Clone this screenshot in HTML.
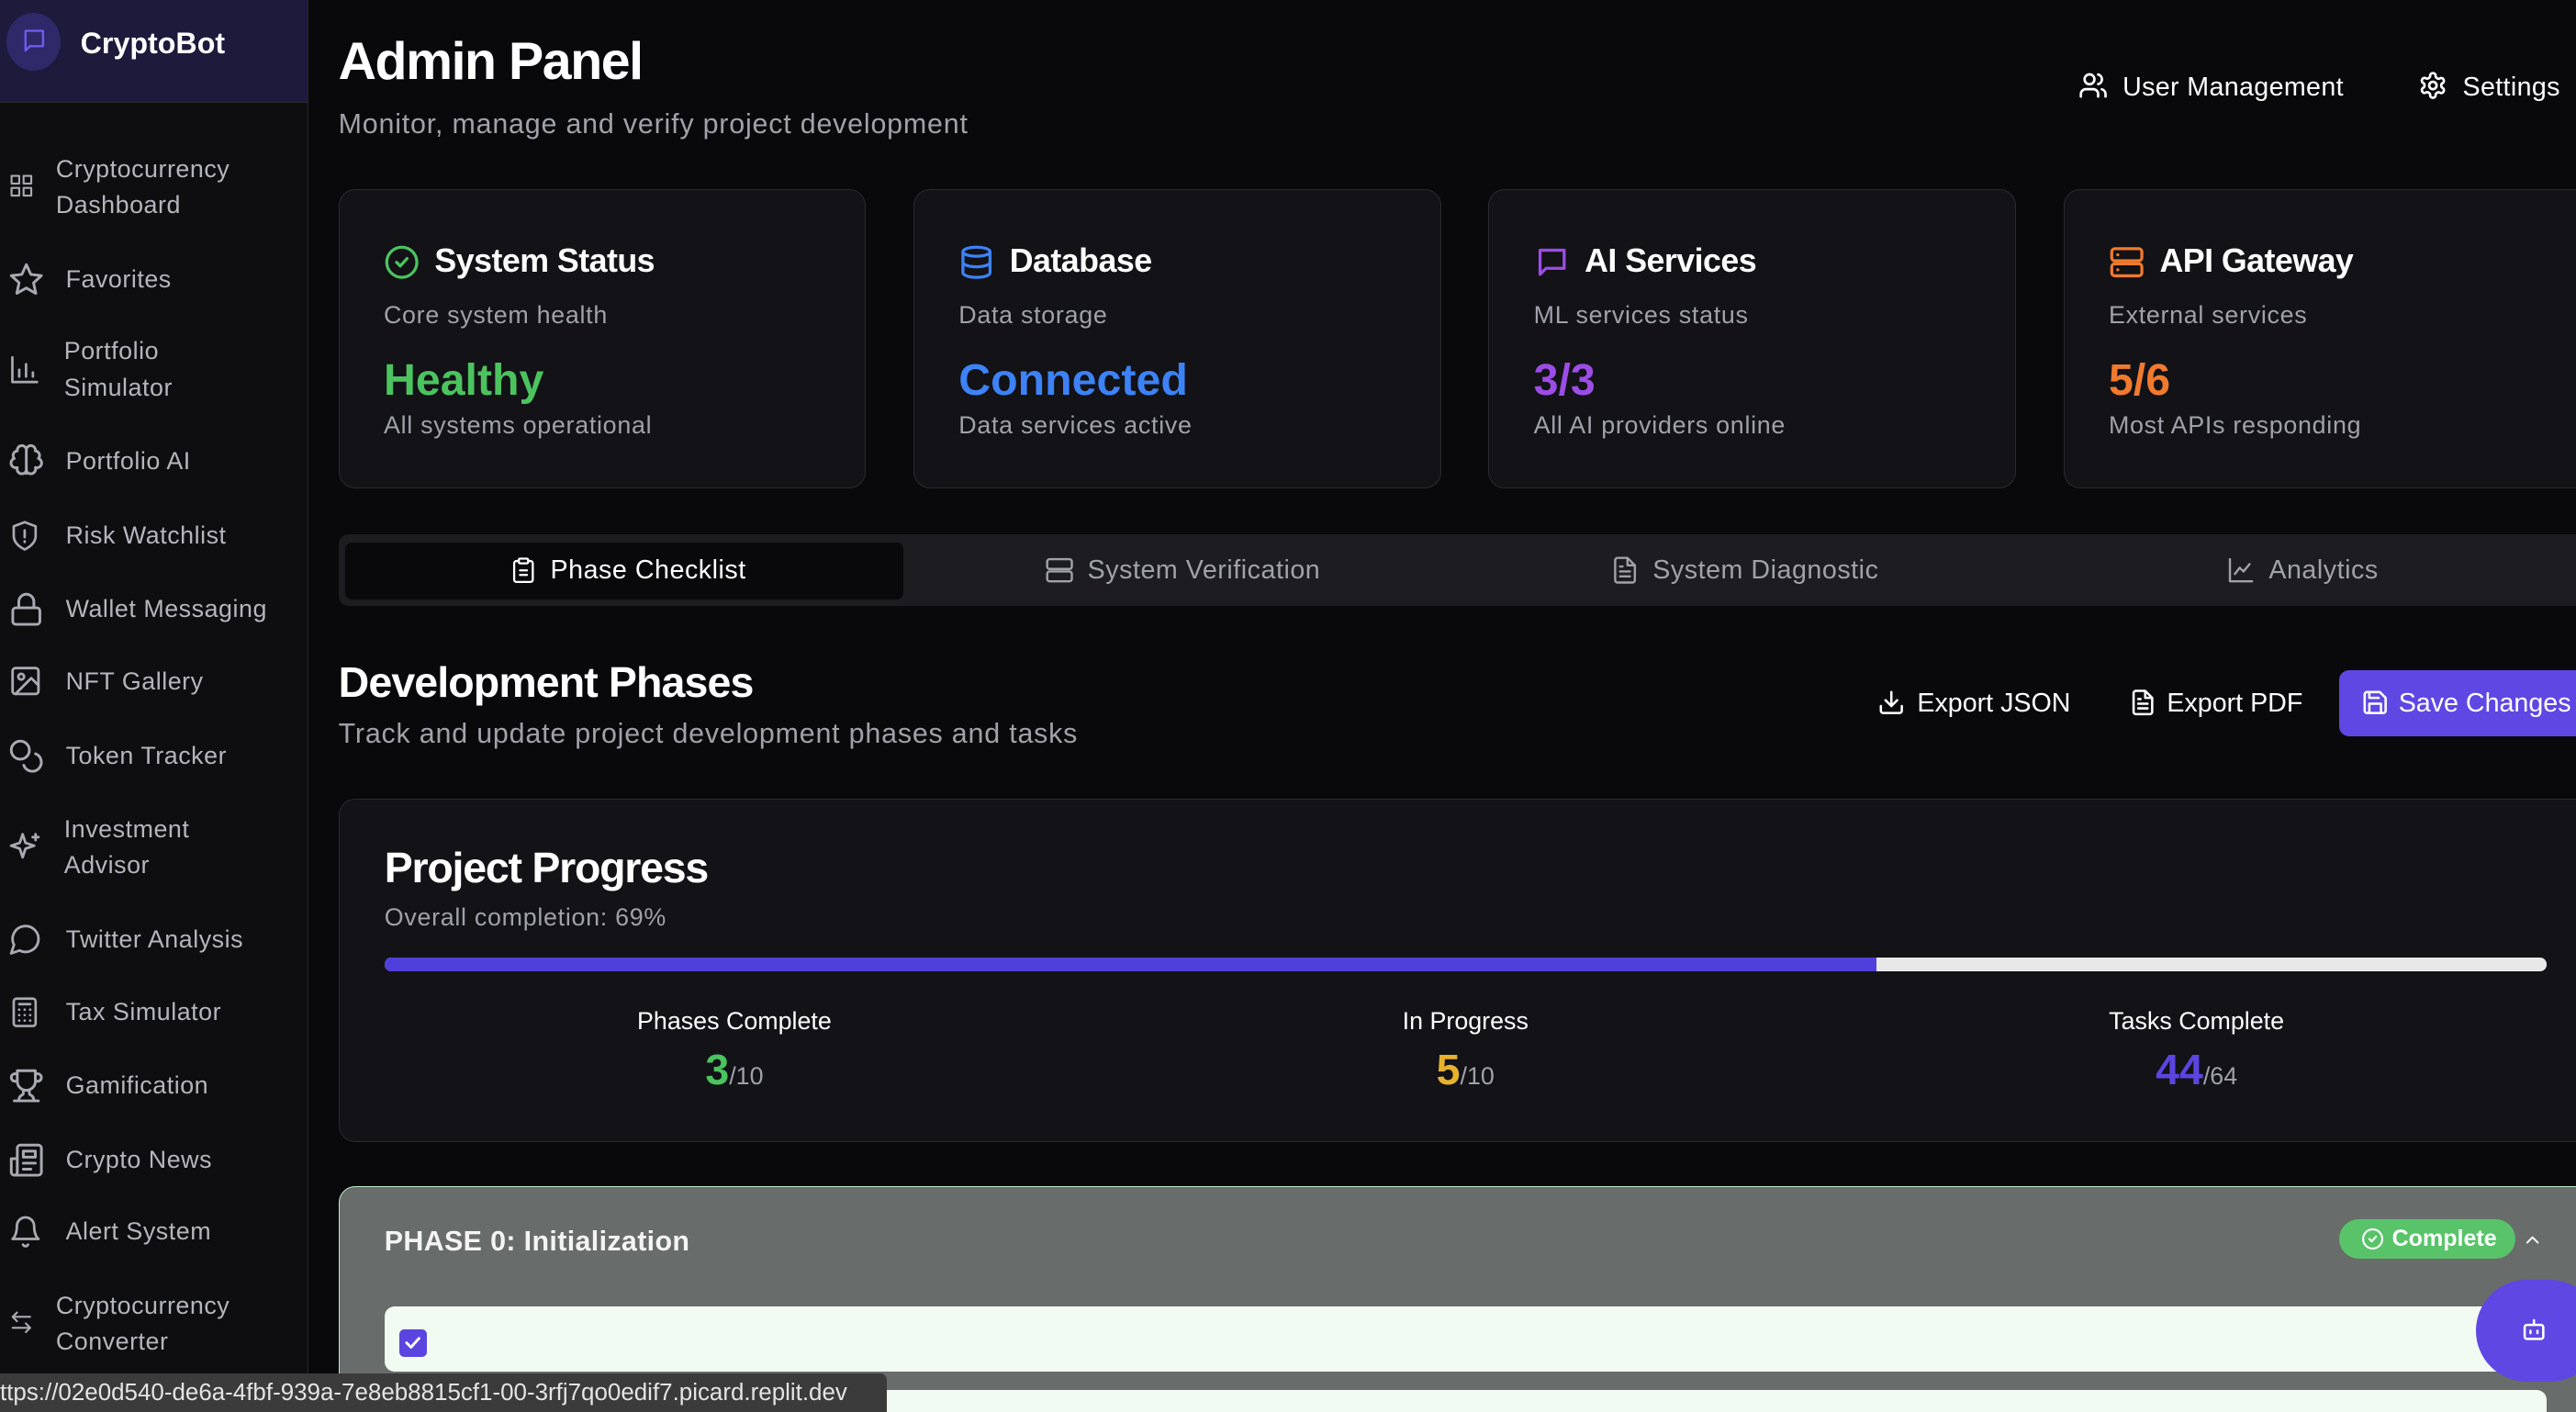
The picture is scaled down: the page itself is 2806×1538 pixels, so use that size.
<!DOCTYPE html>
<html><head><meta charset="utf-8"><style>
html,body{margin:0;padding:0;background:#09090b;overflow:hidden;width:2806px;height:1538px}
#w{zoom:1.78954;width:1568px;height:860px;position:relative;font-family:"Liberation Sans",sans-serif;color:#fff;overflow:hidden}
.a{position:absolute}
svg{fill:none;stroke-width:2;stroke-linecap:round;stroke-linejoin:round}
.side{left:0;top:0;width:187px;height:860px;background:#0e0e11;border-right:1px solid #26262b}
.nav{position:absolute;left:0;width:187px;font-size:15px;color:#b5b5bd;line-height:22px;letter-spacing:.3px}
.nav svg{position:absolute;left:5px;stroke:#a9a9b2;stroke-width:1.8}
.card{top:115px;width:320px;height:181px;background:#121217;border:1px solid #2a2a31;border-radius:10px}
.card .t{position:absolute;left:58px;top:32px;font-size:20px;font-weight:bold;letter-spacing:-.3px}
.card svg{position:absolute;left:27px;top:33px}
.card .s{position:absolute;left:27px;top:68px;font-size:15px;color:#a1a1aa;letter-spacing:.4px}
.card .v{position:absolute;left:27px;top:100px;font-size:27px;font-weight:bold}
.card .d{position:absolute;left:27px;top:135px;font-size:15px;color:#a1a1aa;letter-spacing:.4px}
.tab{top:338px;font-size:16px;color:#a1a1aa;display:flex;align-items:center;gap:8px;letter-spacing:.3px}
.tab svg{stroke:#a1a1aa;stroke-width:1.8}
.stl{font-size:15px;width:200px;text-align:center;top:613px}
.stv{font-size:26px;font-weight:bold;width:200px;text-align:center;top:636px}
.stv span{font-size:15px;font-weight:normal;color:#a1a1aa}
</style></head><body><div id="w">
<div class="a side">
 <div class="a" style="left:0;top:0;width:187px;height:62px;background:#1e1a3b;border-bottom:1px solid #2a2a30"></div>
 <div class="a" style="left:4px;top:8px;width:33px;height:35px;border-radius:50%;background:#2e2968"></div>
 <svg class="a" style="left:13px;top:17px" width="16" height="16" viewBox="0 0 24 24" stroke="#6c5cf0"><path d="M4 3h16v14H8l-4 4z"/></svg>
 <div class="a" style="left:49px;top:16px;font-size:18px;font-weight:bold">CryptoBot</div>
 <div class="nav" style="top:92px"><svg style="top:13px" width="16" height="16" viewBox="0 0 24 24"><rect x="3" y="3" width="7" height="7"/><rect x="14" y="3" width="7" height="7"/><rect x="3" y="14" width="7" height="7"/><rect x="14" y="14" width="7" height="7"/></svg><div style="padding-left:34px">Cryptocurrency<br>Dashboard</div></div>
 <div class="nav" style="top:159px"><svg style="top:0" width="22" height="22" viewBox="0 0 24 24"><path d="M12 2l3 6.5 7 .8-5.2 4.8 1.5 7L12 17.5 5.7 21l1.5-7L2 9.3l7-.8z"/></svg><div style="padding-left:40px">Favorites</div></div>
 <div class="nav" style="top:203px"><svg style="top:11px" width="20" height="22" viewBox="0 0 24 24"><path d="M3 3v18h18M8 17v-5M13 17V8M18 17v-3"/></svg><div style="padding-left:39px">Portfolio<br>Simulator</div></div>
 <div class="nav" style="top:270px"><svg style="top:0" width="22" height="22" viewBox="0 0 24 24"><path d="M12 4a3 3 0 0 0-6 1 3 3 0 0 0-2 5 3 3 0 0 0 2 6 3 3 0 0 0 6 2zM12 4a3 3 0 0 1 6 1 3 3 0 0 1 2 5 3 3 0 0 1-2 6 3 3 0 0 1-6 2zM12 4v16"/></svg><div style="padding-left:40px">Portfolio AI</div></div>
 <div class="nav" style="top:315px"><svg style="top:0" width="20" height="22" viewBox="0 0 24 24"><path d="M12 2l8 3v7c0 5-4 8-8 10-4-2-8-5-8-10V5zM12 8v5M12 16v.5"/></svg><div style="padding-left:40px">Risk Watchlist</div></div>
 <div class="nav" style="top:360px"><svg style="top:0" width="22" height="22" viewBox="0 0 24 24"><rect x="3" y="11" width="18" height="11" rx="2"/><path d="M7 11V7a5 5 0 0 1 10 0v4"/></svg><div style="padding-left:40px">Wallet Messaging</div></div>
 <div class="nav" style="top:404px"><svg style="top:0" width="21" height="21" viewBox="0 0 24 24"><rect x="3" y="3" width="18" height="18" rx="2"/><circle cx="9" cy="9" r="2"/><path d="M21 15l-5-5L5 21"/></svg><div style="padding-left:40px">NFT Gallery</div></div>
 <div class="nav" style="top:449px"><svg style="top:0" width="22" height="22" viewBox="0 0 24 24"><circle cx="8" cy="8" r="6"/><path d="M18.1 10.4A6 6 0 1 1 10.3 18"/></svg><div style="padding-left:40px">Token Tracker</div></div>
 <div class="nav" style="top:494px"><svg style="top:11px" width="21" height="21" viewBox="0 0 24 24"><path d="M10 3l2 6 6 2-6 2-2 6-2-6-6-2 6-2zM19 3v4M17 5h4"/></svg><div style="padding-left:39px">Investment<br>Advisor</div></div>
 <div class="nav" style="top:561px"><svg style="top:0" width="21" height="21" viewBox="0 0 24 24"><path d="M7.9 20A9 9 0 1 0 4 16.1L2 22z"/></svg><div style="padding-left:40px">Twitter Analysis</div></div>
 <div class="nav" style="top:605px"><svg style="top:0" width="20" height="22" viewBox="0 0 24 24"><rect x="4" y="2" width="16" height="20" rx="2"/><path d="M8 6h8M8 10h.01M12 10h.01M16 10h.01M8 14h.01M12 14h.01M16 14h.01M8 18h.01M12 18h.01M16 18h.01"/></svg><div style="padding-left:40px">Tax Simulator</div></div>
 <div class="nav" style="top:650px"><svg style="top:0" width="22" height="22" viewBox="0 0 24 24"><path d="M6 9H4.5a2.5 2.5 0 0 1 0-5H6M18 9h1.5a2.5 2.5 0 0 0 0-5H18M4 22h16M10 14.7V17c0 .6-.5 1-1 1.2C7.9 18.8 7 20.2 7 22M14 14.7V17c0 .6.5 1 1 1.2 1.1.6 2 2 2 3.8M18 2H6v7a6 6 0 0 0 12 0z"/></svg><div style="padding-left:40px">Gamification</div></div>
 <div class="nav" style="top:695px"><svg style="top:0" width="22" height="22" viewBox="0 0 24 24"><path d="M4 22h16a2 2 0 0 0 2-2V4a2 2 0 0 0-2-2H8a2 2 0 0 0-2 2v16a2 2 0 0 1-4 0v-9h4M18 14h-8M15 18h-5M10 6h8v4h-8z"/></svg><div style="padding-left:40px">Crypto News</div></div>
 <div class="nav" style="top:739px"><svg style="top:0" width="21" height="22" viewBox="0 0 24 24"><path d="M6 8a6 6 0 0 1 12 0c0 7 3 9 3 9H3s3-2 3-9M10.3 21a1.9 1.9 0 0 0 3.4 0"/></svg><div style="padding-left:40px">Alert System</div></div>
 <div class="nav" style="top:784px"><svg style="top:13px" width="16" height="16" viewBox="0 0 24 24"><path d="M8 3L4 7l4 4M4 7h16M16 21l4-4-4-4M20 17H4"/></svg><div style="padding-left:34px">Cryptocurrency<br>Converter</div></div>
</div>

<div class="a" style="left:206px;top:19px;font-size:32px;font-weight:bold;letter-spacing:-.8px">Admin Panel</div>
<div class="a" style="left:206px;top:66px;font-size:17px;color:#a1a1aa;letter-spacing:.45px">Monitor, manage and verify project development</div>
<svg class="a" style="left:1265px;top:43px" width="18" height="18" viewBox="0 0 24 24" stroke="#fff"><path d="M16 21v-2a4 4 0 0 0-4-4H6a4 4 0 0 0-4 4v2"/><circle cx="9" cy="7" r="4"/><path d="M22 21v-2a4 4 0 0 0-3-3.9M16 3.1a4 4 0 0 1 0 7.8"/></svg>
<div class="a" style="left:1292px;top:44px;font-size:16px;letter-spacing:.2px">User Management</div>
<svg class="a" style="left:1472px;top:43px" width="18" height="18" viewBox="0 0 24 24" stroke="#fff"><circle cx="12" cy="12" r="3"/><path d="M12.2 2h-.4a2 2 0 0 0-2 2v.2a2 2 0 0 1-1 1.7l-.4.3a2 2 0 0 1-2 0l-.2-.1a2 2 0 0 0-2.7.7l-.2.4a2 2 0 0 0 .7 2.7l.2.1a2 2 0 0 1 1 1.7v.5a2 2 0 0 1-1 1.7l-.2.1a2 2 0 0 0-.7 2.7l.2.4a2 2 0 0 0 2.7.7l.2-.1a2 2 0 0 1 2 0l.4.3a2 2 0 0 1 1 1.7V20a2 2 0 0 0 2 2h.4a2 2 0 0 0 2-2v-.2a2 2 0 0 1 1-1.7l.4-.3a2 2 0 0 1 2 0l.2.1a2 2 0 0 0 2.7-.7l.2-.4a2 2 0 0 0-.7-2.7l-.2-.1a2 2 0 0 1-1-1.7v-.5a2 2 0 0 1 1-1.7l.2-.1a2 2 0 0 0 .7-2.7l-.2-.4a2 2 0 0 0-2.7-.7l-.2.1a2 2 0 0 1-2 0l-.4-.3a2 2 0 0 1-1-1.7V4a2 2 0 0 0-2-2z"/></svg>
<div class="a" style="left:1499px;top:44px;font-size:16px;letter-spacing:.2px">Settings</div>

<div class="a card" style="left:206px"><svg width="22" height="22" viewBox="0 0 24 24" stroke="#4cc35e"><circle cx="12" cy="12" r="10"/><path d="M8.5 12l2.5 2.5 4.5-5"/></svg><div class="t">System Status</div><div class="s">Core system health</div><div class="v" style="color:#4cc35e">Healthy</div><div class="d">All systems operational</div></div>
<div class="a card" style="left:556px"><svg width="22" height="22" viewBox="0 0 24 24" stroke="#3d82f6"><ellipse cx="12" cy="5" rx="9" ry="3"/><path d="M3 5v14c0 1.7 4 3 9 3s9-1.3 9-3V5M3 12c0 1.7 4 3 9 3s9-1.3 9-3"/></svg><div class="t">Database</div><div class="s">Data storage</div><div class="v" style="color:#3d82f6">Connected</div><div class="d">Data services active</div></div>
<div class="a card" style="left:906px"><svg width="22" height="22" viewBox="0 0 24 24" stroke="#9b4de6"><path d="M4 4h16v12H8l-4 4z"/></svg><div class="t">AI Services</div><div class="s">ML services status</div><div class="v" style="color:#9b4de6">3/3</div><div class="d">All AI providers online</div></div>
<div class="a card" style="left:1256px;width:330px"><svg width="22" height="22" viewBox="0 0 24 24" stroke="#f07a2e"><rect x="2" y="3" width="20" height="8" rx="2"/><rect x="2" y="13" width="20" height="8" rx="2"/><path d="M6 7h.01M6 17h.01"/></svg><div class="t">API Gateway</div><div class="s">External services</div><div class="v" style="color:#f07a2e">5/6</div><div class="d">Most APIs responding</div></div>

<div class="a" style="left:206px;top:325px;width:1380px;height:44px;background:#1d1d21;border-radius:6px"></div>
<div class="a" style="left:210px;top:330px;width:340px;height:35px;background:#09090b;border-radius:4px"></div>
<div class="a tab" style="left:310px;color:#fff"><svg width="17" height="17" viewBox="0 0 24 24" style="stroke:#fff"><rect x="8" y="2" width="8" height="4" rx="1"/><path d="M16 4h2a2 2 0 0 1 2 2v14a2 2 0 0 1-2 2H6a2 2 0 0 1-2-2V6a2 2 0 0 1 2-2h2M9 12h6M9 16h6"/></svg>Phase Checklist</div>
<div class="a tab" style="left:636px"><svg width="18" height="18" viewBox="0 0 24 24"><rect x="2" y="3" width="20" height="8" rx="2"/><rect x="2" y="13" width="20" height="8" rx="2"/></svg>System Verification</div>
<div class="a tab" style="left:980px"><svg width="18" height="18" viewBox="0 0 24 24"><path d="M14 2H6a2 2 0 0 0-2 2v16a2 2 0 0 0 2 2h12a2 2 0 0 0 2-2V8zM14 2v6h6M8 13h8M8 17h8M8 9h2"/></svg>System Diagnostic</div>
<div class="a tab" style="left:1355px"><svg width="18" height="18" viewBox="0 0 24 24"><path d="M3 3v18h18M7 15l4-5 3 3 5-6"/></svg>Analytics</div>

<div class="a" style="left:206px;top:400px;font-size:26px;font-weight:bold;letter-spacing:-.5px">Development Phases</div>
<div class="a" style="left:206px;top:437px;font-size:17px;color:#a1a1aa;letter-spacing:.45px">Track and update project development phases and tasks</div>
<svg class="a" style="left:1143px;top:419px" width="17" height="17" viewBox="0 0 24 24" stroke="#fff"><path d="M21 15v4a2 2 0 0 1-2 2H5a2 2 0 0 1-2-2v-4M7 10l5 5 5-5M12 15V3"/></svg>
<div class="a" style="left:1167px;top:419px;font-size:16px">Export JSON</div>
<svg class="a" style="left:1296px;top:419px" width="17" height="17" viewBox="0 0 24 24" stroke="#fff"><path d="M14 2H6a2 2 0 0 0-2 2v16a2 2 0 0 0 2 2h12a2 2 0 0 0 2-2V8zM14 2v6h6M8 13h8M8 17h8M8 9h2"/></svg>
<div class="a" style="left:1319px;top:419px;font-size:16px">Export PDF</div>
<div class="a" style="left:1424px;top:408px;width:170px;height:40px;background:#5f47e4;border-radius:6px"></div>
<svg class="a" style="left:1437px;top:419px" width="17" height="17" viewBox="0 0 24 24" stroke="#fff"><path d="M19 21H5a2 2 0 0 1-2-2V5a2 2 0 0 1 2-2h11l5 5v11a2 2 0 0 1-2 2z"/><path d="M17 21v-8H7v8M7 3v5h8"/></svg>
<div class="a" style="left:1460px;top:419px;font-size:16px">Save Changes</div>

<div class="a" style="left:206px;top:486px;width:1380px;height:208px;background:#121217;border:1px solid #2a2a31;border-radius:10px"></div>
<div class="a" style="left:234px;top:513px;font-size:26px;font-weight:bold;letter-spacing:-.7px">Project Progress</div>
<div class="a" style="left:234px;top:550px;font-size:15px;color:#a1a1aa;letter-spacing:.4px">Overall completion: 69%</div>
<div class="a" style="left:234px;top:583px;width:1316px;height:8px;background:#e8e8e8;border-radius:4px;overflow:hidden"><div style="width:908px;height:8px;background:#4f3fdb"></div></div>
<div class="a stl" style="left:347px">Phases Complete</div>
<div class="a stv" style="left:347px;color:#4cc35e">3<span>/10</span></div>
<div class="a stl" style="left:792px">In Progress</div>
<div class="a stv" style="left:792px;color:#e6b12e">5<span>/10</span></div>
<div class="a stl" style="left:1237px">Tasks Complete</div>
<div class="a stv" style="left:1237px;color:#5b45e0">44<span>/64</span></div>

<div class="a" style="left:206px;top:722px;width:1380px;height:150px;background:#686c6a;border:1px solid #bdebc6;border-radius:10px"></div>
<div class="a" style="left:234px;top:746px;font-size:17px;font-weight:bold;color:#f4f4f4;letter-spacing:.2px">PHASE 0: Initialization</div>
<div class="a" style="left:1424px;top:742px;width:107px;height:24px;background:#59c36a;border-radius:12px"></div>
<svg class="a" style="left:1437px;top:747px" width="14" height="14" viewBox="0 0 24 24" stroke="#fff"><circle cx="12" cy="12" r="10"/><path d="M8.5 12l2.5 2.5 4.5-5"/></svg>
<div class="a" style="left:1456px;top:746px;font-size:14px;font-weight:bold">Complete</div>
<svg class="a" style="left:1535px;top:748px" width="13" height="13" viewBox="0 0 24 24" stroke="#fff"><path d="M6 15l6-6 6 6"/></svg>
<div class="a" style="left:234px;top:795px;width:1316px;height:40px;background:#f1fbf2;border-radius:6px"></div>
<div class="a" style="left:243px;top:809px;width:17px;height:17px;background:#5b45e0;border-radius:3px"></div>
<svg class="a" style="left:245px;top:811px;stroke-width:3" width="13" height="13" viewBox="0 0 24 24" stroke="#fff"><path d="M5 12l5 5 9-10"/></svg>
<div class="a" style="left:234px;top:846px;width:1316px;height:40px;background:#f1fbf2;border-radius:6px"></div>
<div class="a" style="left:1507px;top:779px;width:76px;height:62px;background:#5f47e4;border-radius:38px"></div>
<svg class="a" style="left:1534px;top:801px" width="17" height="17" viewBox="0 0 24 24" stroke="#fff"><rect x="4" y="8" width="16" height="12" rx="2"/><path d="M12 8V4M9 13v2M15 13v2"/></svg>
<div class="a" style="left:0;top:836px;width:540px;height:24px;background:#3b3b3b;border-top-right-radius:4px;font-size:14.5px;color:#e4e4e4;line-height:24px;white-space:nowrap;overflow:hidden">ttps://02e0d540-de6a-4fbf-939a-7e8eb8815cf1-00-3rfj7qo0edif7.picard.replit.dev</div>
</div></body></html>
